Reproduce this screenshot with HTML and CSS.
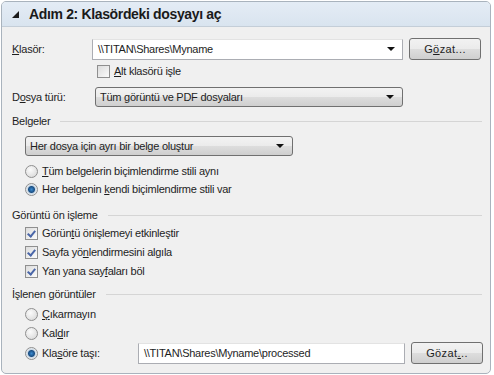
FILE: index.html
```html
<!DOCTYPE html>
<html lang="tr">
<head>
  <meta charset="UTF-8" />
  <title>Adım 2</title>
  <link rel="stylesheet" href="styles.css">
</head>
<body>
<div class="panel">
  <div class="panel-head">
    <span class="caret"></span>
    <h1>Adım 2: Klasördeki dosyayı aç</h1>
  </div>

  <div class="panel-body">
    <div class="row row-folder">
      <span class="lbl"><u>K</u>lasör:</span>
      <div class="combo">
        <span class="val">\\TITAN\Shares\Myname</span>
        <span class="arrow"></span>
      </div>
      <button class="btn">G<u>ö</u>zat...</button>
    </div>

    <div class="row row-sub">
      <span class="check"></span>
      <span><u>A</u>lt klasörü işle</span>
    </div>

    <div class="row row-type">
      <span class="lbl">D<u>o</u>sya türü:</span>
      <div class="select wide">
        <span class="val">Tüm görüntü ve PDF dosyaları</span>
        <span class="arrow"></span>
      </div>
    </div>

    <div class="group g-docs">Bel<u>g</u>eler</div>
    <div class="indent">
      <div class="row row-docsel">
        <div class="select mid">
          <span class="val">Her dosya için ayrı bir belge oluştur</span>
          <span class="arrow"></span>
        </div>
      </div>
      <div class="row opt opt-first"><span class="radio"></span><span><u>T</u>üm belgelerin biçimlendirme stili aynı</span></div>
      <div class="row opt"><span class="radio on"></span><span>Her belgenin <u>k</u>endi biçimlendirme stili var</span></div>
    </div>

    <div class="group g-pre">Görüntü ön işleme</div>
    <div class="indent">
      <div class="row opt tight"><span class="check on"></span><span>Görün<u>t</u>ü önişlemeyi etkinleştir</span></div>
      <div class="row opt tight"><span class="check on"></span><span>Sayfa yö<u>n</u>lendirmesini algıla</span></div>
      <div class="row opt tight"><span class="check on"></span><span>Yan yana say<u>f</u>aları böl</span></div>
    </div>

    <div class="group g-done">İşlenen görüntüler</div>
    <div class="indent">
      <div class="row opt opt-first2"><span class="radio"></span><span><u>Ç</u>ıkarmayın</span></div>
      <div class="row opt tight"><span class="radio"></span><span>Kal<u>d</u>ır</span></div>
      <div class="row row-move">
        <span class="radio on"></span>
        <span class="move-lbl">Kla<u>s</u>öre taşı:</span>
        <div class="combo plain">
          <span class="val">\\TITAN\Shares\Myname\processed</span>
        </div>
        <button class="btn">Gözat<u>.</u>..</button>
      </div>
    </div>
  </div>
</div>
</body>
</html>
```

FILE: styles.css
```css
* {
  box-sizing: border-box;
}
body {
  margin: 0;
  background: #fff;
  font-family: 'Liberation Sans', Arial, sans-serif;
  font-size: 11px;
  letter-spacing: -0.25px;
  color: #1e1e1e;
}

.panel {
  margin: 1px;
  width: 490px;
  height: 373px;
  border: 1px solid #a9b3bd;
  border-radius: 5px;
  background: #f0f0f0;
  overflow: hidden;
}

.panel-head {
  height: 25px;
  display: flex;
  align-items: center;
  padding-left: 10px;
  background: linear-gradient(#e4ecf5, #d9e4ef);
  border-bottom: 1px solid #c4ced8;
}
.caret {
  width: 0;
  height: 0;
  border-left: 7px solid transparent;
  border-bottom: 7px solid #1a1a1a;
  margin-right: 10px;
}
.panel-head h1 {
  margin: 0;
  font-size: 14px;
  letter-spacing: -0.35px;
  font-weight: bold;
  color: #1a1a1a;
}

.panel-body {
  padding: 11px 0 0 10px;
}

.row {
  display: flex;
  align-items: center;
}
.lbl {
  width: 80px;
}

/* comboboxes */
.combo {
  height: 21px;
  width: 311px;
  border: 1px solid #abadb3;
  border-top-color: #e3e3e3;
  background: #fff;
  display: flex;
  align-items: center;
  padding: 0 7px 0 5px;
}
.combo.plain {
  width: 267px;
}
.val {
  flex: 1;
  white-space: nowrap;
}
.arrow {
  width: 0;
  height: 0;
  border-left: 4px solid transparent;
  border-right: 4px solid transparent;
  border-top: 4px solid #111;
}
.select {
  height: 20px;
  border: 1px solid #707070;
  border-radius: 3px;
  background: linear-gradient(#f3f3f3 0%, #ebebeb 50%, #dddddd 51%, #cfcfcf 100%);
  display: flex;
  align-items: center;
  padding: 0 8px 0 4px;
}
.select.wide {
  width: 308px;
  margin-left: 3px;
}
.select.mid {
  width: 268px;
}

.btn {
  width: 72px;
  height: 22px;
  margin-left: 6px;
  border: 1px solid #707070;
  border-radius: 3px;
  background: linear-gradient(#f2f2f2 0%, #ebebeb 50%, #dddddd 51%, #cfcfcf 100%);
  font: inherit;
  letter-spacing: 0.4px;
  color: #1e1e1e;
  padding: 0;
}

.row-folder {
  height: 22px;
}
.row-sub {
  height: 18px;
  margin-top: 2px;
  padding-left: 85px;
}
.row-type {
  height: 20px;
  margin-top: 7px;
}

/* group headings */
.group {
  display: flex;
  align-items: center;
  height: 16px;
  margin-right: 8px;
  white-space: nowrap;
}
.group::after {
  content: "";
  flex: 1;
  border-top: 1px solid #d5d5d5;
  margin-left: 10px;
}
.g-docs {
  margin-top: 6px;
}
.g-pre {
  margin-top: 9px;
}
.g-done {
  margin-top: 6px;
}

.indent {
  padding-left: 13px;
}
.row-docsel {
  height: 20px;
  margin-top: 7px;
}
.opt {
  height: 18px;
}
.opt-first {
  margin-top: 6px;
}
.tight {
  margin-top: 1px;
}
.opt-first2 {
  margin-top: 3px;
}
.row-move {
  height: 22px;
}
.move-lbl {
  width: 96px;
}

/* check boxes and radios */
.check {
  width: 13px;
  height: 13px;
  border: 1px solid #8f8f8f;
  background: linear-gradient(135deg, #dcdcdc, #fbfbfb);
  margin-right: 4px;
  position: relative;
}
.check.on::after {
  content: "";
  position: absolute;
  left: 3px;
  top: 1px;
  width: 3px;
  height: 6px;
  border-right: 2px solid #4a66a8;
  border-bottom: 2px solid #4a66a8;
  transform: rotate(40deg);
}
.radio {
  width: 13px;
  height: 13px;
  border-radius: 50%;
  border: 1px solid #8f8f8f;
  background: radial-gradient(circle at 40% 35%, #fbfbfb, #d4d4d4);
  margin-right: 4px;
}
.radio.on {
  background: radial-gradient(circle, #3a8ad0 0, #1b4f84 3px, #c9d7e4 4px, #f4f4f4 6px);
}
```
